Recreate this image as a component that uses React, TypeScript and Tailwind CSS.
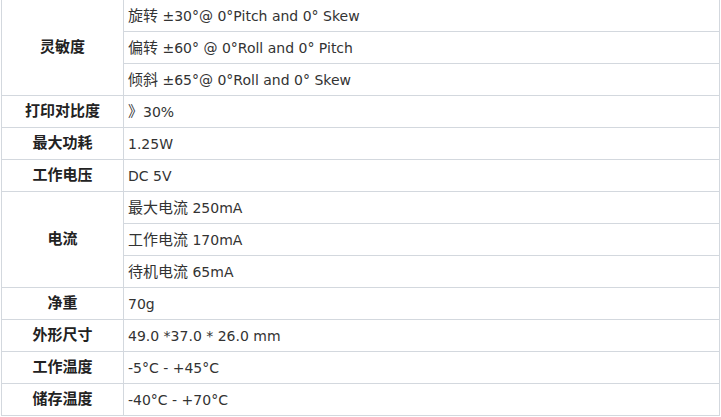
import React from 'react';

interface SpecRow {
  label: string;
  values: [string, string][];
}

// each value: [chinese prefix, latin rest]
const rows: SpecRow[] = [
  {
    label: '灵敏度',
    values: [
      ['旋转', ' ±30°@ 0°Pitch and 0° Skew'],
      ['偏转', ' ±60° @ 0°Roll and 0° Pitch'],
      ['倾斜', ' ±65°@ 0°Roll and 0° Skew'],
    ],
  },
  { label: '打印对比度', values: [['》', '30%']] },
  { label: '最大功耗', values: [['', '1.25W']] },
  { label: '工作电压', values: [['', 'DC 5V']] },
  {
    label: '电流',
    values: [
      ['最大电流', ' 250mA'],
      ['工作电流', ' 170mA'],
      ['待机电流', ' 65mA'],
    ],
  },
  { label: '净重', values: [['', '70g']] },
  { label: '外形尺寸', values: [['', '49.0 *37.0 * 26.0 mm']] },
  { label: '工作温度', values: [['', '-5°C - +45°C']] },
  { label: '储存温度', values: [['', '-40°C - +70°C']] },
];

export default function App() {
  return (
    <div
      className="w-[721px] h-[417px] overflow-hidden bg-white text-[14px] text-[#333]"
      style={{ fontFamily: '"DejaVu Sans", "Noto Sans CJK SC", sans-serif' }}
    >
      <table className="ml-px -mt-px w-[719px] border-collapse table-fixed">
        <colgroup>
          <col className="w-[122px]" />
          <col />
        </colgroup>
        <tbody>
          {rows.map((row) =>
            row.values.map(([cjk, rest], i) => (
              <tr key={row.label + i}>
                {i === 0 && (
                  <td
                    rowSpan={row.values.length}
                    className="border border-[#d3d8de] text-center text-[15px] font-bold text-[#222] align-middle"
                  >
                    {row.label}
                  </td>
                )}
                <td className="h-[32px] border border-[#d3d8de] pl-[4px] pt-px align-middle leading-none whitespace-pre">
                  {cjk && <span className="text-[15px]">{cjk}</span>}
                  {rest}
                </td>
              </tr>
            ))
          )}
        </tbody>
      </table>
    </div>
  );
}
